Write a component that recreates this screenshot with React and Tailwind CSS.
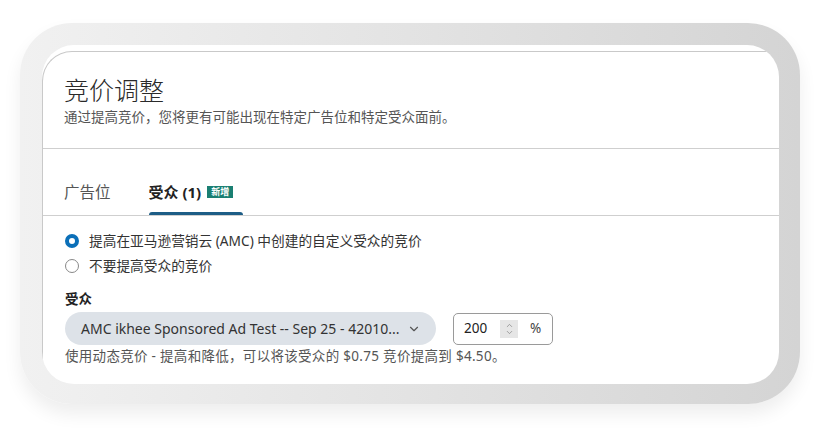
import { ChevronDown, ChevronUp } from "lucide-react"

const font = { fontFamily: '"Noto Sans", "Noto Sans CJK SC", sans-serif' }

export default function App() {
  return (
    <div className="w-[825px] h-[444px] bg-white overflow-hidden pt-[23px] pl-[20px]" style={font}>
      {/* phone frame */}
      <div className="w-[780px] h-[381px] rounded-[52px] bg-gradient-to-r from-[#f1f1f1] via-[#e3e3e3] to-[#d4d4d4] pt-[22px] pl-[22px] pr-[21px] pb-[20px] shadow-[0_10px_18px_rgba(0,0,0,0.07)]">
        <div className="w-full h-full bg-white rounded-[32px] overflow-hidden pt-[6px]">
          <div className="h-full border-t border-l border-[#c9c9c9] rounded-tl-[30px] text-[#333]">
            {/* header */}
            <div className="pt-[24px] pb-[22px] pl-[21px]">
              <h1 className="text-[25px] leading-[29px] font-light text-[#2a2a2a]">竞价调整</h1>
              <p className="mt-[4px] text-[13.5px] leading-[17px] text-[#555]">
                通过提高竞价，您将更有可能出现在特定广告位和特定受众面前。
              </p>
            </div>

            {/* tabs */}
            <div className="border-t border-b border-[#cfcfcf] h-[68px] flex items-end pl-[21px] gap-[38px]">
              <div className="pb-[13px] text-[15.5px] leading-[20px] text-[#555]">广告位</div>
              <div className="flex flex-col">
                <div className="flex items-center gap-[6px] pb-[10px]">
                  <span className="text-[15px] leading-[20px] font-bold text-[#222]">受众 (1)</span>
                  <span className="bg-[#1a7f72] text-white text-[9px] leading-[12px] px-[4px] font-bold">新增</span>
                </div>
                <div className="h-[3px] w-[94px] bg-[#1d5d86] rounded-t-sm" />
              </div>
            </div>

            {/* body */}
            <div className="pl-[22px] pt-[14px]">
              <label className="flex items-center gap-[10px] h-[22px] text-[13.7px] text-[#333]">
                <span className="w-[14px] h-[14px] rounded-full border-[4px] border-[#0b6fb8] bg-white" />
                提高在亚马逊营销云 (AMC) 中创建的自定义受众的竞价
              </label>
              <label className="mt-[3px] flex items-center gap-[10px] h-[22px] text-[13.7px] text-[#333]">
                <span className="w-[14px] h-[14px] rounded-full border border-[#888] bg-white" />
                不要提高受众的竞价
              </label>

              <div className="mt-[14px] text-[13.5px] leading-[17px] font-bold text-[#222]">受众</div>

              <div className="mt-[4px] flex items-center gap-[17px]">
                <div className="w-[371px] h-[33px] rounded-full bg-[#dde2e8] flex items-center justify-between pl-[16px] pr-[15px]">
                  <span className="text-[14px] text-[#333]">AMC ikhee Sponsored Ad Test -- Sep 25 - 42010...</span>
                  <ChevronDown className="w-[14px] h-[14px] text-[#555]" strokeWidth={2} />
                </div>
                <div className="w-[100px] h-[32px] rounded-[5px] border border-[#9a9a9a] flex items-center pl-[10px]">
                  <span className="text-[13.5px] text-[#222] w-[36px]">200</span>
                  <span className="w-[18px] h-[18px] bg-[#e6e6e6] flex flex-col items-center justify-center">
                    <ChevronUp className="w-[9px] h-[9px] -mb-[1px] text-[#888]" strokeWidth={2} />
                    <ChevronDown className="w-[9px] h-[9px] -mt-[1px] text-[#888]" strokeWidth={2} />
                  </span>
                  <span className="ml-[12px] text-[13.5px] text-[#444]">%</span>
                </div>
              </div>

              <p className="mt-[3px] text-[13.5px] tracking-[0.3px] leading-[17px] text-[#555]">
                使用动态竞价 - 提高和降低，可以将该受众的 $0.75 竞价提高到 $4.50。
              </p>
            </div>
          </div>
        </div>
      </div>
    </div>
  )
}
